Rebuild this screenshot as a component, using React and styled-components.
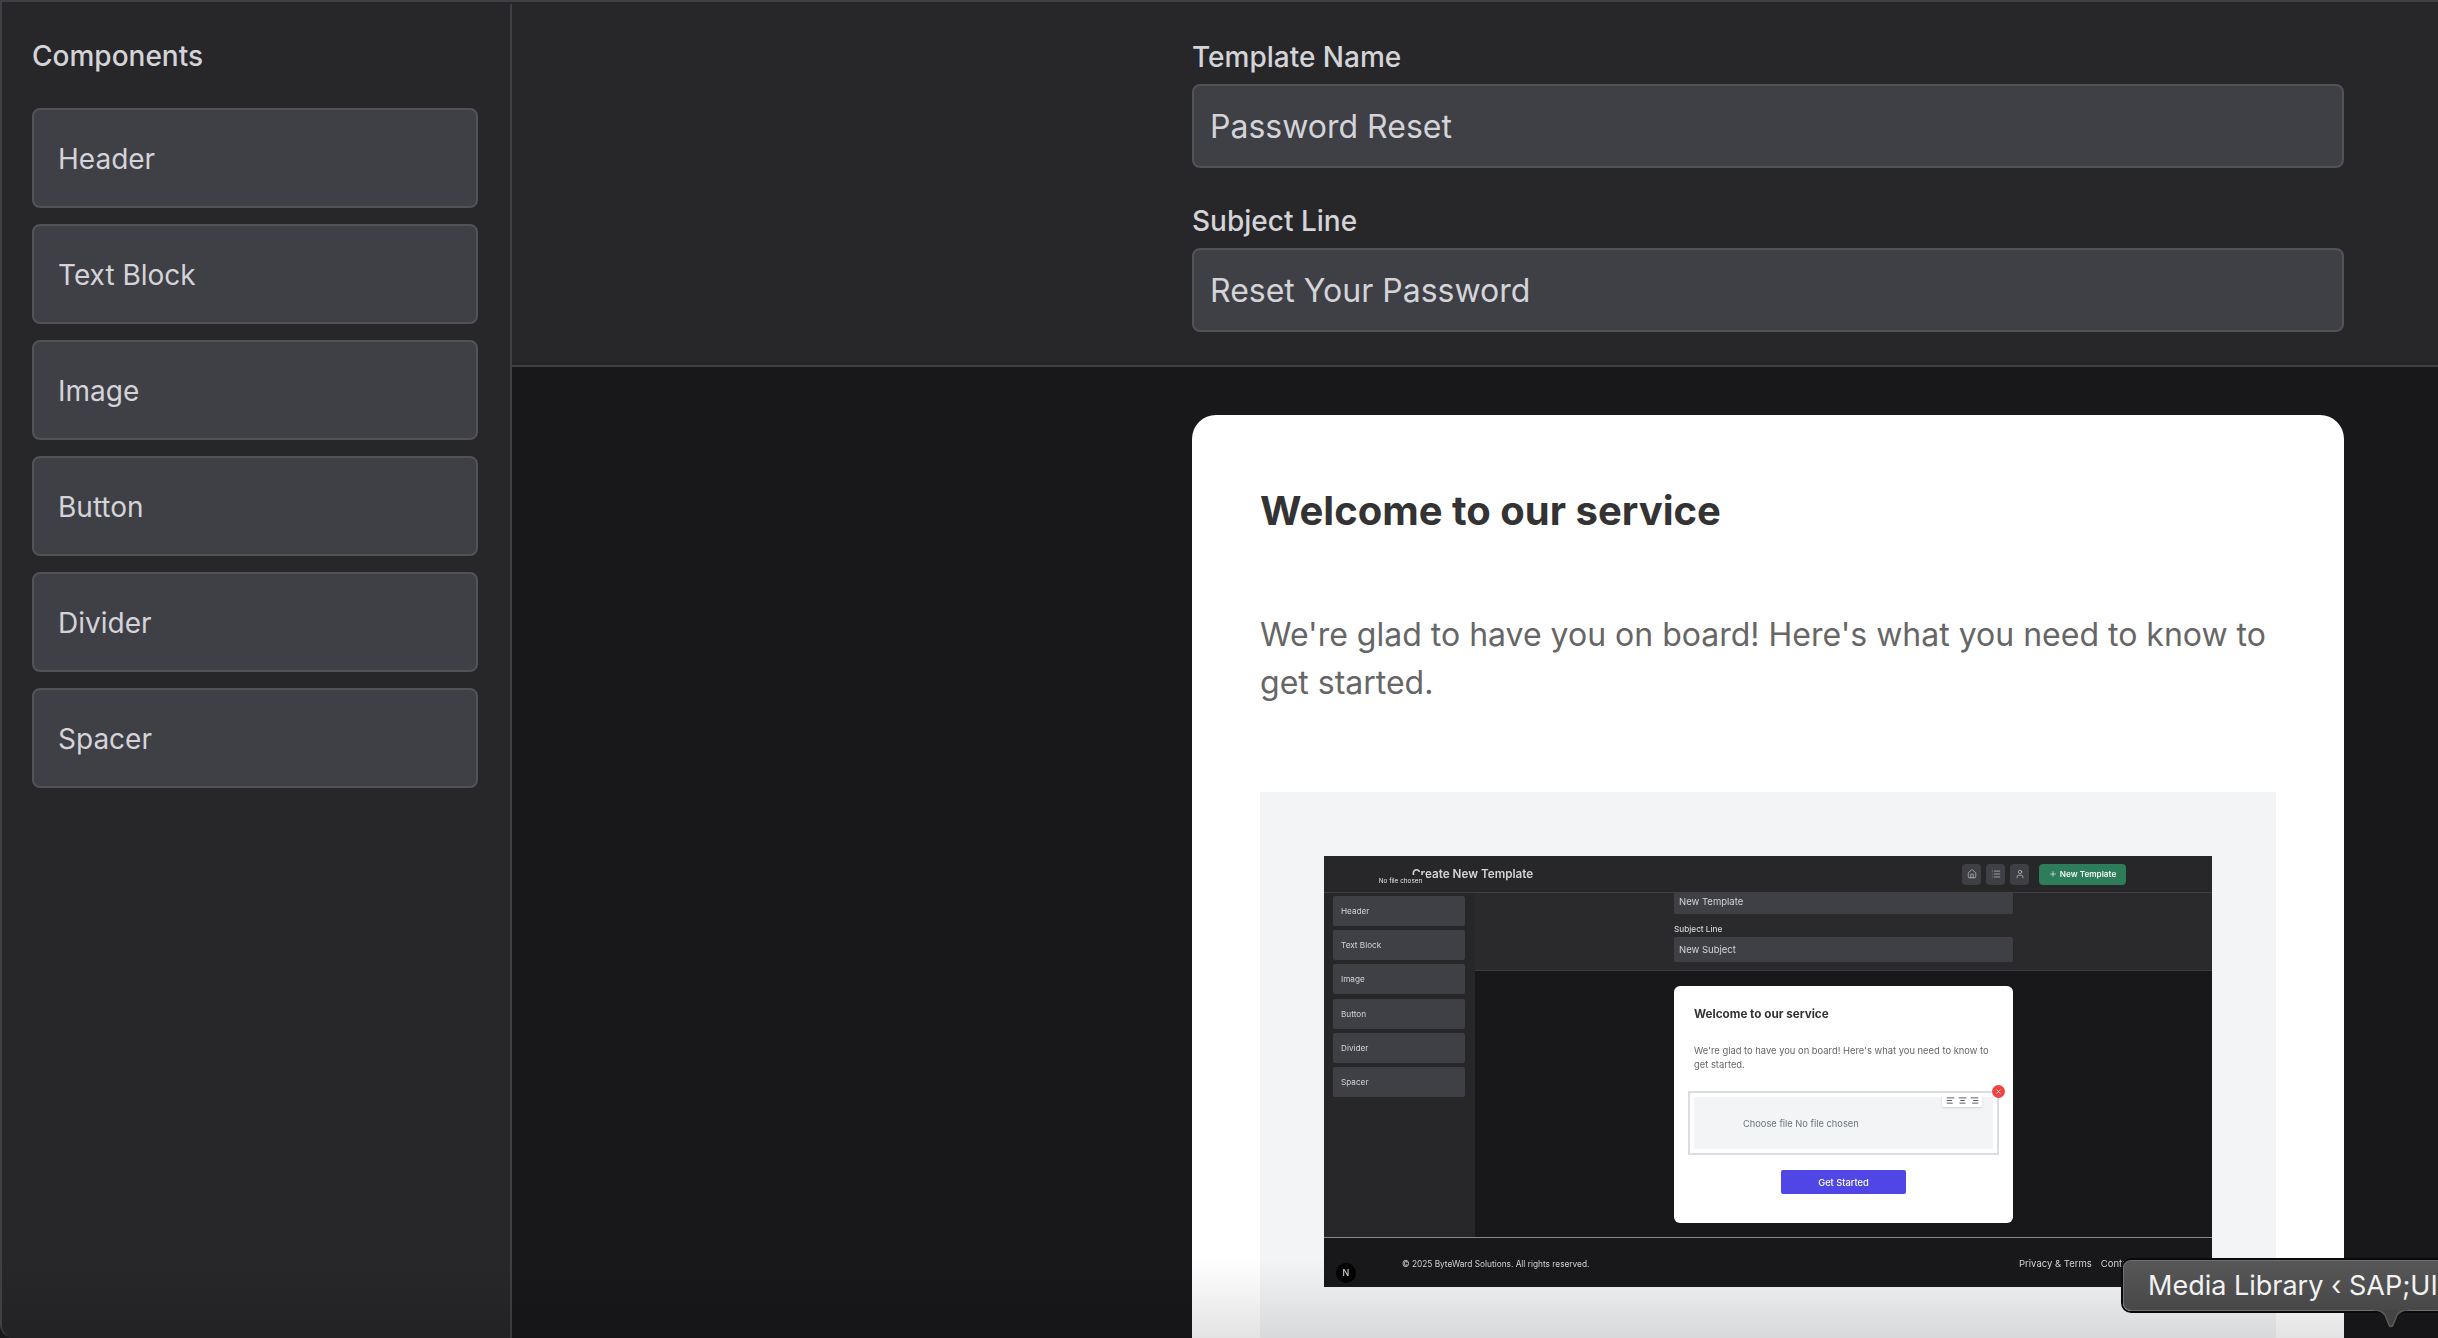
import React from "react";
import styled, { createGlobalStyle } from "styled-components";
import { Home, List, User, Plus, X, AlignLeft, AlignCenter, AlignRight } from "lucide-react";

const GlobalStyle = createGlobalStyle`
  html, body {
    margin: 0;
    padding: 0;
    background: #18181b;
    font-family: Inter, "Liberation Sans", sans-serif;
  }
  * {
    box-sizing: border-box;
  }
`;

const Page = styled.div`
  position: relative;
  display: flex;
  width: 100vw;
  height: 100vh;
  overflow: hidden;
  background: #27272a;
  border-top: 2px solid #3f3f46;
  border-left: 2px solid #3f3f46;
  border-bottom-left-radius: 14px;
  padding-top: 2px;
`;

const Sidebar = styled.aside`
  flex: 0 0 510px;
  padding: 32px 32px 0 30px;
  background: #27272a;
  border-right: 2px solid #3f3f46;
`;

const SidebarTitle = styled.h2`
  margin: 0 0 32px;
  font-size: 28px;
  line-height: 40px;
  font-weight: 500;
  color: #d4d4d8;
`;

const BlockList = styled.div`
  display: flex;
  flex-direction: column;
  gap: 16px;
`;

const BlockButton = styled.div`
  display: flex;
  align-items: center;
  height: 100px;
  padding: 2px 24px 0;
  background: #3f3f46;
  border: 2px solid #52525b;
  border-radius: 8px;
  font-size: 28px;
  color: #d4d4d8;
`;

const Main = styled.main`
  flex: 1;
  min-width: 0;
  display: flex;
  flex-direction: column;
`;

const FormBar = styled.section`
  padding: 32px 0 33px 680px;
  background: #27272a;
  border-bottom: 2px solid #3f3f46;
`;

const FormColumn = styled.div`
  width: 1152px;
`;

const FieldLabel = styled.label`
  display: block;
  margin: ${(props) => (props.$first ? "0" : "32px")} 0 6px;
  font-size: 28px;
  line-height: 42px;
  font-weight: 500;
  color: #d4d4d8;
`;

const FieldBox = styled.div`
  display: flex;
  align-items: center;
  height: 84px;
  padding: 0 16px;
  background: #3f3f46;
  border: 2px solid #52525b;
  border-radius: 8px;
  font-size: 32px;
  color: #d4d4d8;
`;

const Preview = styled.section`
  flex: 1;
  padding: 48px 0 0 680px;
  background: #18181b;
`;

const Card = styled.article`
  width: 1152px;
  padding: 68px 68px 0;
  background: #fff;
  border-radius: 24px 24px 0 0;
`;

const CardTitle = styled.h1`
  margin: 0 0 72px;
  font-size: 40px;
  line-height: 56px;
  font-weight: 700;
  color: #333;
`;

const CardText = styled.p`
  margin: 0 0 85px;
  font-size: 32px;
  line-height: 48px;
  color: #666;
`;

const ImageBox = styled.div`
  padding: 64px 64px 100px;
  background: #f3f4f6;
`;

/* the screenshot inside the email template */
const Shot = styled.div`
  display: flex;
  flex-direction: column;
  height: 431px;
  filter: blur(0.35px);
  background: #18181b;
`;

const ShotHeader = styled.header`
  position: relative;
  flex: 0 0 37px;
  display: flex;
  align-items: center;
  padding: 0 86px 0 88px;
  background: #27272a;
  border-bottom: 1px solid #3f3f46;
`;

const ShotTitle = styled.div`
  flex: 1;
  font-size: 11.7px;
  font-weight: 600;
  color: #d4d4d8;
`;

const NoFileTip = styled.div`
  position: absolute;
  left: 51px;
  top: 19px;
  width: 51px;
  height: 12px;
  background: #27272a;
  font-size: 6.4px;
  line-height: 12px;
  text-align: center;
  color: #e4e4e7;
`;

const IconGroup = styled.div`
  display: flex;
  gap: 5px;
  margin-right: 10px;
`;

const IconButton = styled.div`
  display: flex;
  align-items: center;
  justify-content: center;
  width: 19px;
  height: 21px;
  background: #3f3f46;
  border-radius: 4px;
  color: #d4d4d8;
`;

const NewButton = styled.div`
  display: flex;
  align-items: center;
  justify-content: center;
  gap: 3px;
  width: 87px;
  height: 21px;
  background: #2d7d5a;
  border-radius: 4px;
  font-size: 8.2px;
  font-weight: 600;
  color: #f4f4f5;
`;

const ShotBody = styled.div`
  flex: 1;
  min-height: 0;
  display: flex;
`;

const ShotSidebar = styled.div`
  flex: 0 0 151px;
  display: flex;
  flex-direction: column;
  gap: 4.2px;
  padding: 3px 10px 0 9px;
  background: #27272a;
`;

const ShotBlock = styled.div`
  display: flex;
  align-items: center;
  height: 30px;
  padding: 0 8px;
  background: #3f3f46;
  border-radius: 2px;
  font-size: 8.2px;
  color: #d4d4d8;
`;

const ShotMain = styled.div`
  flex: 1;
  min-width: 0;
  display: flex;
  flex-direction: column;
`;

const ShotForm = styled.div`
  flex: 0 0 78px;
  overflow: hidden;
  padding-left: 199px;
  background: #2a2a2d;
  border-bottom: 1px solid #3a3a40;
`;

const ShotInput = styled.div`
  display: flex;
  align-items: center;
  width: 339px;
  height: 25px;
  margin-top: ${(props) => (props.$clipped ? "-4px" : "0")};
  padding: 0 5px;
  background: #3f3f46;
  border-radius: 2px;
  font-size: 9.5px;
  color: #d4d4d8;
`;

const ShotLabel = styled.div`
  margin: 9px 0 2px;
  font-size: 8.2px;
  line-height: 12px;
  font-weight: 500;
  color: #d4d4d8;
`;

const ShotPreview = styled.div`
  flex: 1;
  padding: 15px 0 0 199px;
  background: #18181b;
`;

const ShotCard = styled.div`
  width: 339px;
  height: 237px;
  padding: 20px 20px 0;
  background: #fff;
  border-radius: 6px;
`;

const ShotCardTitle = styled.div`
  margin-bottom: 22px;
  font-size: 11.7px;
  line-height: 16px;
  font-weight: 700;
  color: #333;
`;

const ShotCardText = styled.div`
  margin-bottom: 19px;
  font-size: 9.4px;
  line-height: 14px;
  color: #666;
`;

const SelectedBlock = styled.div`
  position: relative;
  height: 64px;
  margin: 0 -6px;
  padding: 4px;
  background: #fff;
  border: 2px solid #dcdce4;
`;

const UploadArea = styled.div`
  display: flex;
  align-items: center;
  height: 100%;
  padding-left: 49px;
  background: #f3f4f6;
  font-size: 9.3px;
  color: #6b7280;
`;

const AlignBar = styled.div`
  position: absolute;
  top: 0;
  right: 15px;
  display: flex;
  align-items: center;
  justify-content: center;
  gap: 3px;
  width: 40px;
  height: 14px;
  background: #fff;
  border-radius: 2px;
  box-shadow: 0 1px 2px rgba(0, 0, 0, 0.15);
  color: #27272a;
`;

const RemoveBadge = styled.div`
  position: absolute;
  top: -8px;
  right: -8px;
  display: flex;
  align-items: center;
  justify-content: center;
  width: 13px;
  height: 13px;
  background: #ef4444;
  border-radius: 50%;
  color: #fff;
`;

const StartButton = styled.div`
  display: flex;
  align-items: center;
  justify-content: center;
  width: 125px;
  height: 24px;
  margin: 15px auto 0;
  background: #4f46e5;
  border-radius: 2px;
  font-size: 9.3px;
  font-weight: 500;
  color: #fff;
`;

const ShotFooter = styled.footer`
  position: relative;
  flex: 0 0 50px;
  display: flex;
  justify-content: space-between;
  padding: 20px 0 0 78px;
  background: #18181b;
  border-top: 1px solid #8a8a8e;
  font-size: 8.3px;
  line-height: 12px;
  color: #d4d4d8;
`;

const FooterLinks = styled.div`
  display: flex;
  gap: 9px;
  width: 193px;
  font-size: 9.5px;
  white-space: nowrap;
`;

const NextBadge = styled.div`
  position: absolute;
  left: 12px;
  top: 25px;
  display: flex;
  align-items: center;
  justify-content: center;
  width: 20px;
  height: 20px;
  background: #000;
  border-radius: 50%;
  font-size: 9px;
  color: #eee;
`;

const BottomFade = styled.div`
  position: absolute;
  left: 0;
  right: 0;
  bottom: 0;
  height: 80px;
  background: linear-gradient(to bottom, rgba(0, 0, 0, 0), rgba(0, 0, 0, 0.11));
  pointer-events: none;
`;

const Tooltip = styled.div`
  position: absolute;
  left: 2121px;
  top: 1258px;
  width: 420px;
  height: 51px;
  padding-left: 24px;
  background: linear-gradient(180deg, #575757, #484848);
  border: 1px solid #6f6f6f;
  border-radius: 8px;
  box-shadow: 0 0 0 2px #0a0a0a;
  font-size: 27px;
  line-height: 50px;
  white-space: nowrap;
  color: #f2f2f2;
`;

const TooltipArrow = styled.svg`
  position: absolute;
  left: 247px;
  top: 47px;
`;

const blocks = ["Header", "Text Block", "Image", "Button", "Divider", "Spacer"];

const App = () => {
  return (
    <Page>
      <GlobalStyle />
      <Sidebar>
        <SidebarTitle>Components</SidebarTitle>
        <BlockList>
          {blocks.map((name) => (
            <BlockButton key={name}>{name}</BlockButton>
          ))}
        </BlockList>
      </Sidebar>

      <Main>
        <FormBar>
          <FormColumn>
            <FieldLabel $first>Template Name</FieldLabel>
            <FieldBox>Password Reset</FieldBox>
            <FieldLabel>Subject Line</FieldLabel>
            <FieldBox>Reset Your Password</FieldBox>
          </FormColumn>
        </FormBar>

        <Preview>
          <Card>
            <CardTitle>Welcome to our service</CardTitle>
            <CardText>
              We're glad to have you on board! Here's what you need to know to get started.
            </CardText>
            <ImageBox>
              <Shot>
                <ShotHeader>
                  <ShotTitle>Create New Template</ShotTitle>
                  <NoFileTip>No file chosen</NoFileTip>
                  <IconGroup>
                    <IconButton><Home size={10} strokeWidth={1.5} /></IconButton>
                    <IconButton><List size={10} strokeWidth={1.5} /></IconButton>
                    <IconButton><User size={10} strokeWidth={1.5} /></IconButton>
                  </IconGroup>
                  <NewButton>
                    <Plus size={8} strokeWidth={2} />
                    New Template
                  </NewButton>
                </ShotHeader>

                <ShotBody>
                  <ShotSidebar>
                    {blocks.map((name) => (
                      <ShotBlock key={name}>{name}</ShotBlock>
                    ))}
                  </ShotSidebar>
                  <ShotMain>
                    <ShotForm>
                      <ShotInput $clipped>New Template</ShotInput>
                      <ShotLabel>Subject Line</ShotLabel>
                      <ShotInput>New Subject</ShotInput>
                    </ShotForm>
                    <ShotPreview>
                      <ShotCard>
                        <ShotCardTitle>Welcome to our service</ShotCardTitle>
                        <ShotCardText>
                          We're glad to have you on board! Here's what you need to know to get started.
                        </ShotCardText>
                        <SelectedBlock>
                          <UploadArea>Choose file No file chosen</UploadArea>
                          <AlignBar>
                            <AlignLeft size={9} strokeWidth={2} />
                            <AlignCenter size={9} strokeWidth={2} />
                            <AlignRight size={9} strokeWidth={2} />
                          </AlignBar>
                          <RemoveBadge><X size={7} strokeWidth={2.5} /></RemoveBadge>
                        </SelectedBlock>
                        <StartButton>Get Started</StartButton>
                      </ShotCard>
                    </ShotPreview>
                  </ShotMain>
                </ShotBody>

                <ShotFooter>
                  <span>© 2025 ByteWard Solutions. All rights reserved.</span>
                  <FooterLinks>
                    <span>Privacy &amp; Terms</span>
                    <span>Contact</span>
                  </FooterLinks>
                  <NextBadge>N</NextBadge>
                </ShotFooter>
              </Shot>
            </ImageBox>
          </Card>
        </Preview>
      </Main>

      <BottomFade />

      <Tooltip>
        Media Library ‹ SAP;UI5 — WordPress
        <TooltipArrow width="40" height="22" viewBox="0 0 40 22">
          <path d="M1 2 C8 2 11 3 14 7 L18 17 Q20 20 22 17 L26 7 C29 3 32 2 39 2" fill="#434343" stroke="#5c5c5c" strokeWidth="1.5" />
          <path d="M3 0 H37 V2 H3 Z" fill="#484848" />
        </TooltipArrow>
      </Tooltip>
    </Page>
  );
};

export default App;
